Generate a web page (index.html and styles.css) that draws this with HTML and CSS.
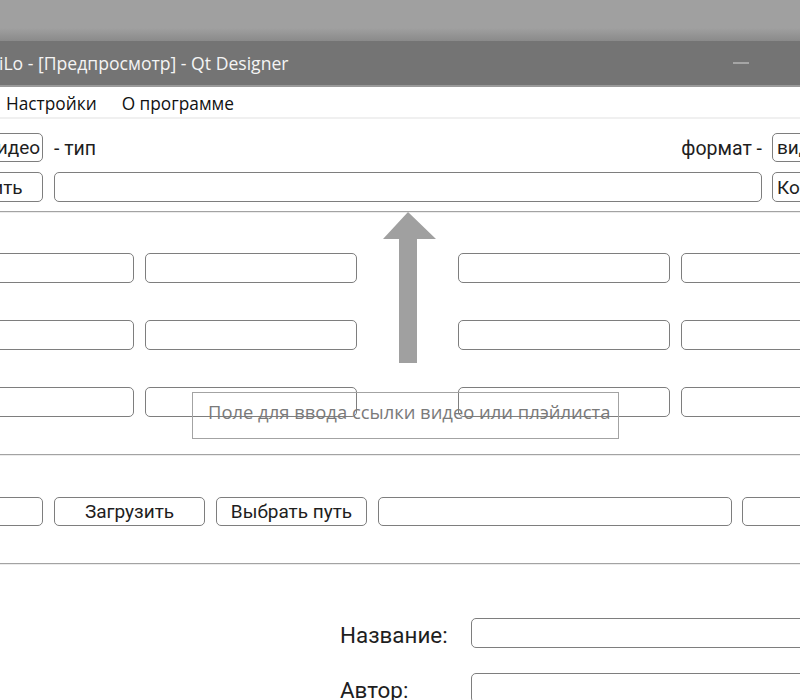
FILE: index.html
```html
<!DOCTYPE html>
<html lang="ru">
<head>
<meta charset="utf-8">
<title>Qt Designer</title>
<link rel="stylesheet" href="styles.css">
</head>
<body>
<div class="desktop"></div>
<div class="titlebar">
  <span class="title">iLo - [Предпросмотр] - Qt Designer</span>
  <span class="minimize"></span>
</div>
<div class="menubar">
  <span class="menu-item">Настройки</span>
  <span class="menu-item">О программе</span>
</div>
<main class="content">
  <div class="row row-top">
    <button class="btn btn-type">Видео</button>
    <span class="label">- тип</span>
    <span class="spacer"></span>
    <span class="label">формат -</span>
    <button class="btn btn-format">видео</button>
  </div>
  <div class="row row-link">
    <button class="btn btn-paste">Вставить</button>
    <div class="field field-grow"></div>
    <button class="btn btn-convert">Конвертировать</button>
  </div>
  <div class="separator"></div>
  <div class="grid">
    <div class="field"></div><div class="field"></div><div></div><div class="field"></div><div class="field"></div>
    <div class="field"></div><div class="field"></div><div></div><div class="field"></div><div class="field"></div>
    <div class="field"></div><div class="field"></div><div></div><div class="field"></div><div class="field"></div>
  </div>
  <div class="separator sep-mid"></div>
  <div class="row row-actions">
    <button class="btn btn-first">Скачать</button>
    <button class="btn btn-wide">Загрузить</button>
    <button class="btn btn-wide">Выбрать путь</button>
    <div class="field field-path"></div>
    <button class="btn btn-last">Открыть папку</button>
  </div>
  <div class="separator sep-mid"></div>
  <div class="form">
    <div class="form-row">
      <span class="form-label">Название:</span>
      <div class="field field-form"></div>
    </div>
    <div class="form-row">
      <span class="form-label">Автор:</span>
      <div class="field field-form"></div>
    </div>
  </div>
</main>
<svg class="arrow" width="60" height="156" viewBox="0 0 60 156" aria-hidden="true">
  <polygon points="25,0 0,27 16,27 16,151 34,151 34,27 53,27" fill="#a0a0a0"/>
</svg>
<div class="hint">Поле для ввода ссылки видео или плэйлиста</div>
</body>
</html>
```
FILE: styles.css
```css
html, body {
  margin: 0;
  padding: 0;
}
body {
  width: 800px;
  height: 700px;
  overflow: hidden;
  position: relative;
  background: #ffffff;
  font-family: Roboto, "Liberation Sans", sans-serif;
  color: #1e1e1e;
}
.desktop {
  height: 41px;
  background: linear-gradient(to bottom, #a0a0a0 0, #a0a0a0 28px, #8a8a8a 41px);
}
.titlebar {
  height: 44px;
  background: #747474;
  border-bottom: 2px solid #9a9a9a;
  display: flex;
  align-items: center;
  position: relative;
}
.title {
  font-family: "Open Sans", "Noto Sans", sans-serif;
  font-size: 17.6px;
  color: #f4f4f4;
  margin-left: -1px;
  margin-top: 0;
  white-space: nowrap;
}
.minimize {
  position: absolute;
  left: 733px;
  top: 21px;
  width: 16px;
  height: 2px;
  background: #a5a5a5;
}
.menubar {
  border-bottom: 2px solid #f0f0f0;
  display: flex;
  align-items: center;
  gap: 25px;
  padding-left: 6px;
  padding-top: 3px;
  box-sizing: border-box;
  height: 32px;
  font-family: "Open Sans", "Noto Sans", sans-serif;
  font-size: 17.3px;
  color: #111;
}
.content {
  padding-top: 14px;
}
.row {
  display: flex;
  align-items: center;
  white-space: nowrap;
}
.btn {
  flex: none;
  box-sizing: border-box;
  height: 29px;
  border: 1px solid #7e7e7e;
  border-radius: 5px;
  background: #ffffff;
  font-family: Roboto, "Liberation Sans", sans-serif;
  font-size: 19px;
  color: #1e1e1e;
  padding: 0 4px;
  white-space: nowrap;
  overflow: hidden;
}
.field {
  box-sizing: border-box;
  height: 30px;
  border: 1px solid #7e7e7e;
  border-radius: 5px;
  background: #ffffff;
}
.label {
  font-size: 19.5px;
  color: #1e1e1e;
  padding-top: 2px;
}
.row-top {
  margin-left: -20px;
  margin-right: -100px;
  height: 29px;
}
.btn-type {
  width: 63px;
  text-align: right;
  margin-right: 11px;
}
.spacer {
  flex: 1;
}
.btn-format {
  width: 128px;
  margin-left: 10px;
  text-align: left;
}
.row-link {
  margin-top: 10px;
  margin-left: -80px;
}
.btn-paste {
  width: 123px;
  height: 30px;
  margin-right: 11px;
}
.field-grow {
  flex: 1;
}
.btn-convert {
  width: 140px;
  height: 30px;
  margin-left: 10px;
  margin-right: -112px;
  text-align: left;
}
.separator {
  margin-top: 9px;
  height: 0;
  border-top: 1px solid #a3a3a3;
  border-bottom: 1px solid #ececec;
}
.grid {
  margin-top: 40px;
  margin-left: -78px;
  display: grid;
  grid-template-columns: 212px 212px 79px 212px 212px;
  grid-auto-rows: 30px;
  column-gap: 11px;
  row-gap: 37px;
}
.sep-mid {
  margin-top: 37px;
}
.row-actions {
  margin-top: 41px;
  margin-left: -188px;
  gap: 11px;
}
.btn-first {
  width: 231px;
  text-align: left;
}
.btn-wide {
  width: 151px;
  text-align: center;
}
.field-path {
  flex: none;
  width: 354px;
  height: 29px;
}
.btn-last {
  margin-left: -1px;
  width: 300px;
  text-align: right;
}
.form {
  margin-top: 53px;
  display: flex;
  flex-direction: column;
  gap: 25px;
}
.form-row {
  display: flex;
  align-items: center;
  padding-left: 340px;
  height: 30px;
}
.form-label {
  flex: none;
  width: 131px;
  font-size: 22.4px;
  color: #1e1e1e;
  padding-top: 3px;
}
.field-form {
  flex: none;
  width: 360px;
}
.arrow {
  position: absolute;
  left: 383px;
  top: 212px;
}
.hint {
  position: absolute;
  left: 192px;
  top: 392px;
  width: 427px;
  height: 47px;
  box-sizing: border-box;
  border: 1px solid #a3a3a3;
  padding: 6px 0 0 15px;
  font-family: "Open Sans", "Noto Sans", sans-serif;
  font-size: 18.4px;
  color: #7a7a7a;
  white-space: nowrap;
}
```
